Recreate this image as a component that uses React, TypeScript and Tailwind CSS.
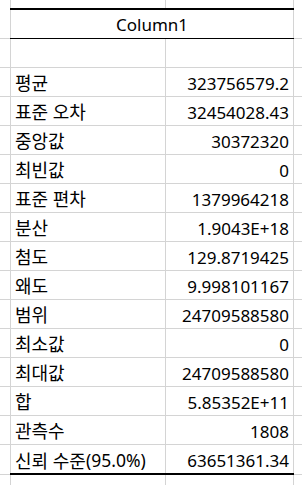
import React from "react";

const rows: [string, string, string?][] = [
  ["평균", "323756579.2"],
  ["표준 오차", "32454028.43"],
  ["중앙값", "30372320"],
  ["최빈값", "0"],
  ["표준 편차", "1379964218"],
  ["분산", "1.9043E+18"],
  ["첨도", "129.8719425"],
  ["왜도", "9.998101167"],
  ["범위", "24709588580"],
  ["최소값", "0"],
  ["최대값", "24709588580"],
  ["합", "5.85352E+11"],
  ["관측수", "1808"],
  ["신뢰 수준", "63651361.34", "(95.0%)"],
];

export default function App() {
  return (
    <div
      className="w-[302px] h-[485px] bg-white overflow-hidden flex flex-col text-black text-[17px] leading-none"
      style={{ fontFamily: '"Noto Sans", "Noto Sans CJK KR", sans-serif' }}
    >
      {/* top strip */}
      <div className="flex h-[8px] shrink-0">
        <div className="w-[10px] shrink-0" />
        <div className="w-[155px] shrink-0 border-l border-[#d4d4d4]" />
        <div className="w-[129px] shrink-0 border-l border-r border-[#d4d4d4]" />
        <div className="flex-1" />
      </div>
      {/* header */}
      <div className="flex h-[31px] shrink-0">
        <div className="w-[10px] shrink-0 border-b border-[#d4d4d4]" />
        <div className="w-[284px] shrink-0 border-l border-r border-[#d4d4d4] relative">
          <div className="absolute left-[-1px] right-[-1px] top-0 h-[2px] bg-black" />
          <div className="absolute left-[-1px] right-[-1px] bottom-0 h-[1px] bg-black" />
          <div className="h-full flex items-center justify-center pt-[2px]">Column1</div>
        </div>
        <div className="flex-1 border-b border-[#d4d4d4]" />
      </div>
      {/* blank row */}
      <div className="flex h-[29px] shrink-0">
        <div className="w-[10px] shrink-0 border-b border-[#d4d4d4]" />
        <div className="w-[155px] shrink-0 border-l border-b border-[#d4d4d4]" />
        <div className="w-[129px] shrink-0 border-l border-r border-b border-[#d4d4d4]" />
        <div className="flex-1 border-b border-[#d4d4d4]" />
      </div>
      {rows.map(([label, value, suffix], i) => {
        const last = i === rows.length - 1;
        return (
          <div key={i} className={`flex shrink-0 ${last ? "h-[30px]" : "h-[29px]"}`}>
            <div className="w-[10px] shrink-0 border-b border-[#d4d4d4]" />
            <div className="w-[284px] shrink-0 flex relative">
              <div className="w-[155px] shrink-0 border-l border-b border-[#d4d4d4] flex items-center pl-[4px] pt-[2px] whitespace-nowrap text-[18px]">
                {label}
                {suffix && <span className="text-[17.5px]">{suffix}</span>}
              </div>
              <div className="w-[129px] shrink-0 border-l border-r border-b border-[#d4d4d4] flex items-center justify-end pr-[4px] pt-[2px]">
                {value}
              </div>
              {last && <div className="absolute left-0 right-0 bottom-0 h-[2px] bg-black" />}
            </div>
            <div className="flex-1 border-b border-[#d4d4d4]" />
          </div>
        );
      })}
      {/* bottom strip */}
      <div className="flex flex-1">
        <div className="w-[10px] shrink-0" />
        <div className="w-[155px] shrink-0 border-l border-[#d4d4d4]" />
        <div className="w-[129px] shrink-0 border-l border-r border-[#d4d4d4]" />
        <div className="flex-1" />
      </div>
    </div>
  );
}
